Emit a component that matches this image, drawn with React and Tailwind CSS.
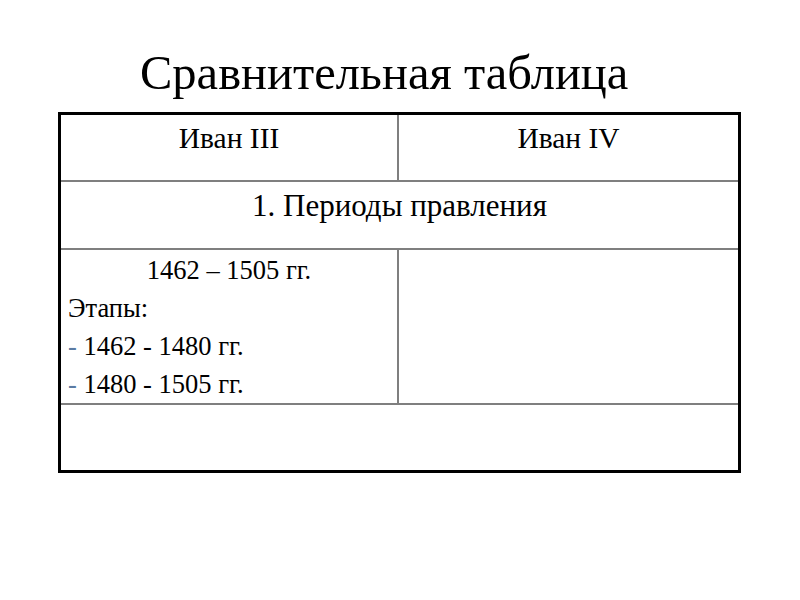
export default function App() {
  return (
    <div className="w-[800px] h-[600px] bg-white text-black overflow-hidden" style={{ fontFamily: '"Liberation Serif", "Times New Roman", serif' }}>
      <div className="pt-[45px] pl-[140px] h-[112px]">
        <div className="text-[48.5px] leading-[56px] whitespace-nowrap">Сравнительная таблица</div>
      </div>
      <div className="ml-[58px] w-[683px] border-[3px] border-black">
        <div className="flex h-[67px] border-b-2 border-[#7f7f7f]">
          <div className="w-[338px] border-r-2 border-[#7f7f7f] text-center text-[29.5px] leading-[34px] pt-[6px]">Иван III</div>
          <div className="flex-1 text-center text-[29.5px] leading-[34px] pt-[6px]">Иван IV</div>
        </div>
        <div className="h-[68px] border-b-2 border-[#7f7f7f] text-center text-[31px] leading-[36px] pt-[6px]">1. Периоды правления</div>
        <div className="flex h-[155px] border-b-2 border-[#7f7f7f]">
          <div className="w-[338px] border-r-2 border-[#7f7f7f] text-[26.5px] leading-[38px] px-[7px] pt-[1px] whitespace-nowrap">
            <div className="text-center">1462 – 1505 гг.</div>
            <div>Этапы:</div>
            <div><span className="text-[#5b7ba3]">-</span> 1462 - 1480 гг.</div>
            <div><span className="text-[#5b7ba3]">-</span> 1480 - 1505 гг.</div>
          </div>
          <div className="flex-1"></div>
        </div>
        <div className="h-[65px]"></div>
      </div>
    </div>
  );
}
